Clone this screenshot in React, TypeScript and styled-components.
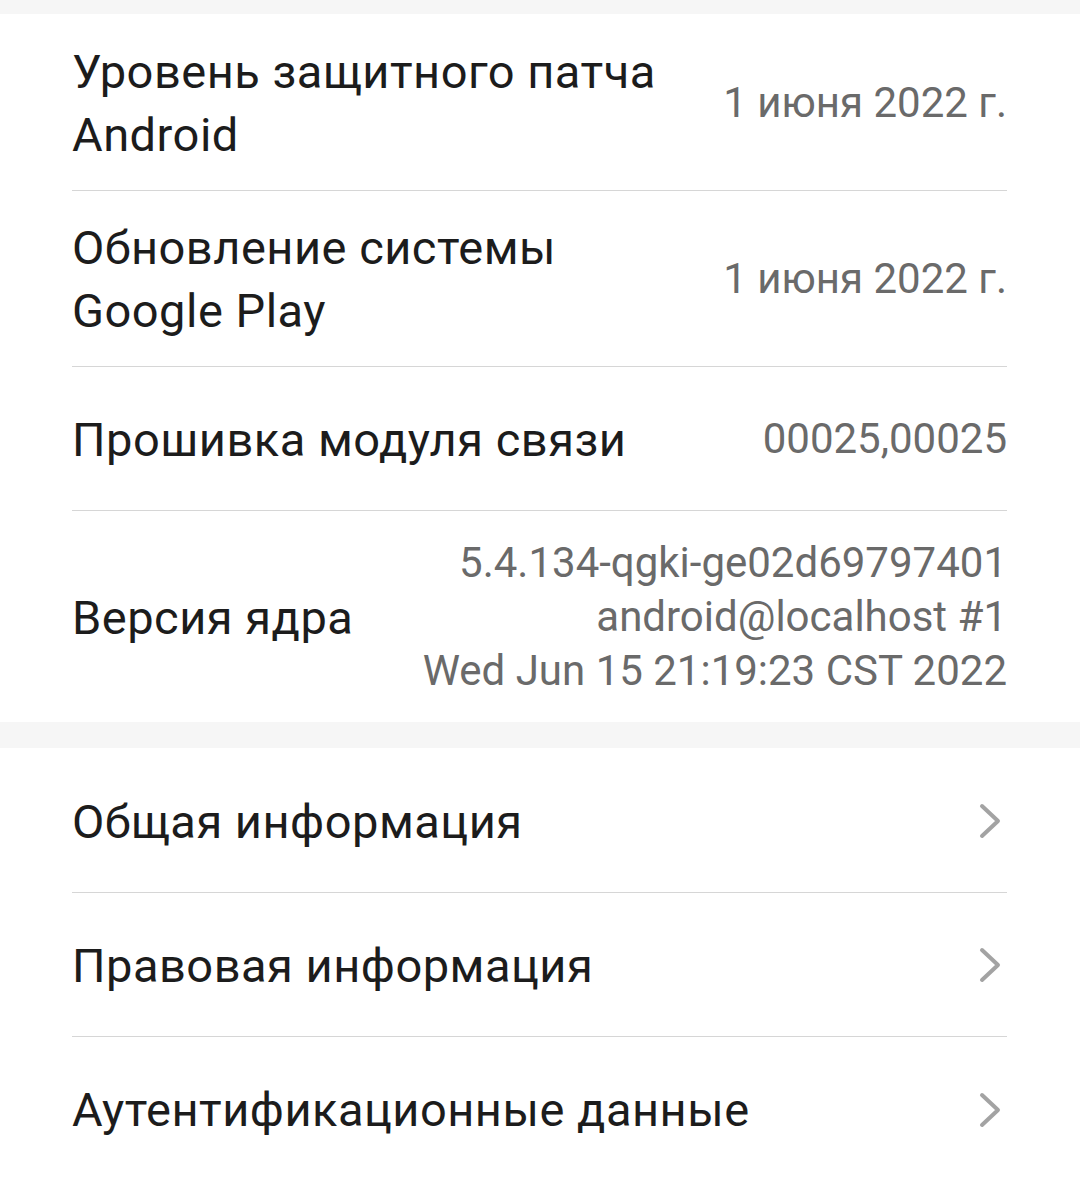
import React from 'react';
import styled, { createGlobalStyle } from 'styled-components';

const GlobalStyle = createGlobalStyle`
  html, body {
    margin: 0;
    padding: 0;
    background: #f6f6f6;
    font-family: Roboto, 'Noto Sans', sans-serif;
  }
`;

const Page = styled.div`
  width: 1080px;
  padding-top: 14px;
  display: flex;
  flex-direction: column;
  gap: 26px;
`;

const Card = styled.section`
  background: #ffffff;
  padding: 1px 73px 0 72px;
`;

const Row = styled.div<{ last?: boolean }>`
  display: flex;
  align-items: center;
  justify-content: space-between;
  gap: 40px;
  min-height: 144px;
  padding: 25px 0 24px;
  box-sizing: border-box;
  border-bottom: ${({ last }) => (last ? 'none' : '1.5px solid #d6d6d6')};
`;

const Title = styled.div`
  color: #1c1c1c;
  font-size: 47px;
  line-height: 63px;
  letter-spacing: 0.5px;
  white-space: nowrap;
`;

const Value = styled.div`
  color: #6a6a6a;
  font-size: 42px;
  line-height: 54px;
  text-align: right;
  white-space: nowrap;
`;

const Chevron = () => (
  <svg width="29" height="40" viewBox="0 0 29 40" fill="none">
    <path
      d="M4 5 L20 20 L4 35"
      stroke="#a3a3a3"
      strokeWidth="4"
      strokeLinecap="round"
      strokeLinejoin="round"
    />
  </svg>
);

const infoRows = [
  { title: ['Уровень защитного патча', 'Android'], value: ['1 июня 2022 г.'] },
  { title: ['Обновление системы', 'Google Play'], value: ['1 июня 2022 г.'] },
  { title: ['Прошивка модуля связи'], value: ['00025,00025'] },
  {
    title: ['Версия ядра'],
    value: ['5.4.134-qgki-ge02d69797401', 'android@localhost #1', 'Wed Jun 15 21:19:23 CST 2022'],
  },
];

const linkRows = ['Общая информация', 'Правовая информация', 'Аутентификационные данные'];

const App: React.FC = () => {
  return (
    <>
      <GlobalStyle />
      <Page>
        <Card>
          {infoRows.map((row, i) => (
            <Row key={i} last={i === infoRows.length - 1}>
              <Title>
                {row.title.map((line) => (
                  <div key={line}>{line}</div>
                ))}
              </Title>
              <Value>
                {row.value.map((line) => (
                  <div key={line}>{line}</div>
                ))}
              </Value>
            </Row>
          ))}
        </Card>
        <Card>
          {linkRows.map((label, i) => (
            <Row key={label} last={i === linkRows.length - 1}>
              <Title>{label}</Title>
              <Chevron />
            </Row>
          ))}
        </Card>
      </Page>
    </>
  );
};

export default App;
